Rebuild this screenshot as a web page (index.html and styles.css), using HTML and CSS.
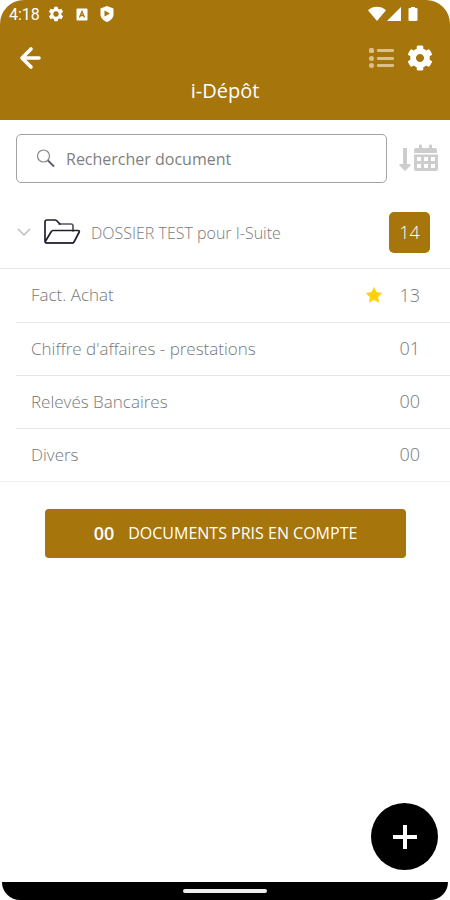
FILE: index.html
```html
<!DOCTYPE html>
<html lang="fr">
<head>
<meta charset="utf-8">
<meta name="viewport" content="width=device-width, initial-scale=1">
<title>i-Dépôt</title>
<link rel="stylesheet" href="styles.css">
</head>
<body>
<div class="screen">
  <header class="header">
    <div class="status">
      <div class="status-group">
        <span class="clock">4:18</span>
        <svg class="status-gear" width="16" height="16" viewBox="0 0 24 24" fill="#fff" aria-hidden="true"><path fill-rule="evenodd" d="M9.500 1h5l.6 3.300 1.900 1.100 3.100-1.200 2.500 4.400-2.500 2.100v2.600l2.500 2.100-2.500 4.400-3.100-1.200-1.900 1.100-.6 3.300h-5l-.6-3.300L7 18.600l-3.100 1.200-2.500-4.400 2.500-2.100v-2.600L1.400 8.600l2.500-4.400L7 5.400l1.900-1.100zM12 8a4 4 0 1 0 0 8 4 4 0 0 0 0-8z"/></svg>
        <svg class="status-app" width="12" height="13" viewBox="0 0 12 13" aria-hidden="true"><rect x="0.500" y="0.500" width="11" height="12" rx="1" fill="#fff"/><path d="M3.500 9.500 6 3.500l2.500 6M4.500 7.500h3" fill="none" stroke="#a6750b" stroke-width="1.300"/></svg>
        <svg width="14" height="16" viewBox="0 0 14 16" aria-hidden="true"><path d="M7 0l6.500 2.500v6c0 3.500-3 6-6.500 7.500C3.500 14.500.5 12 .5 8.500v-6z" fill="#fff"/><path d="M4.500 4.500v6L10 7.500z" fill="#a6750b"/></svg>
      </div>
      <svg width="52" height="16" viewBox="0 0 52 16" fill="#fff" aria-hidden="true"><path d="M-1 4.200C4-.4 12-.4 17 4.200L8 15z"/><path d="M32 1v14H18z"/><path d="M42 1h4v1h1.500q1 0 1 1v11q0 1-1 1h-7q-1 0-1-1V3q0-1 1-1H42z"/></svg>
    </div>
    <div class="toolbar">
      <button class="icon-button" type="button" aria-label="Retour">
        <svg width="22" height="22" viewBox="0 0 22 22" fill="none" stroke="#fff" stroke-width="3.600" stroke-linecap="round" stroke-linejoin="round"><path d="M11 2 2 11l9 9M3 11h16"/></svg>
      </button>
      <div class="toolbar-actions">
        <button class="icon-button" type="button" aria-label="Liste">
          <svg width="26" height="22" viewBox="0 0 26 22" fill="#dbc08c"><rect x="0" y="1" width="5" height="5" rx="1.500"/><rect x="0" y="9" width="5" height="5" rx="2.500"/><rect x="0" y="16" width="5" height="5" rx="2.500"/><rect x="8" y="2" width="17" height="3" rx="1"/><rect x="8" y="10" width="17" height="3" rx="1"/><rect x="8" y="17" width="17" height="3" rx="1"/></svg>
        </button>
        <button class="icon-button" type="button" aria-label="Paramètres">
          <svg width="26" height="26" viewBox="0 0 512 512" fill="#fff"><path d="M487.400 315.700l-42.600-24.600c4.300-23.200 4.300-47 0-70.200l42.600-24.600c4.900-2.800 7.100-8.600 5.500-14-11.100-35.600-30-67.800-54.700-94.600-3.800-4.100-10-5.100-14.800-2.300L380.800 110c-17.900-15.400-38.500-27.300-60.800-35.100V25.800c0-5.600-3.900-10.500-9.400-11.700-36.700-8.200-74.300-7.800-109.200 0-5.500 1.200-9.400 6.100-9.400 11.700V75c-22.200 7.900-42.800 19.800-60.800 35.100L88.700 85.500c-4.900-2.800-11-1.900-14.800 2.300-24.700 26.700-43.600 58.900-54.700 94.600-1.700 5.400.6 11.200 5.500 14L67.300 221c-4.300 23.200-4.300 47 0 70.200l-42.600 24.600c-4.900 2.800-7.100 8.600-5.500 14 11.100 35.600 30 67.800 54.700 94.600 3.800 4.100 10 5.100 14.800 2.300l42.600-24.600c17.900 15.400 38.500 27.300 60.800 35.100v49.200c0 5.600 3.900 10.500 9.400 11.700 36.700 8.200 74.300 7.800 109.200 0 5.500-1.200 9.400-6.100 9.400-11.700v-49.200c22.200-7.900 42.800-19.800 60.800-35.100l42.600 24.600c4.900 2.800 11 1.900 14.800-2.300 24.700-26.700 43.600-58.900 54.700-94.600 1.500-5.500-.7-11.300-5.600-14.100zM256 336c-44.100 0-80-35.900-80-80s35.900-80 80-80 80 35.900 80 80-35.900 80-80 80z"/></svg>
        </button>
      </div>
    </div>
    <h1 class="title">i-Dépôt</h1>
  </header>

  <main class="content">
    <form class="search">
      <label class="search-box">
        <svg width="20" height="20" viewBox="0 0 20 20" fill="none" aria-hidden="true"><circle cx="7.500" cy="7" r="6" stroke="#85878b" stroke-width="1.200"/><path d="M12 11.500 18 17.500" stroke="#5a5c64" stroke-width="1.800"/></svg>
        <input class="search-input" type="search" placeholder="Rechercher document" aria-label="Rechercher document">
      </label>
      <button class="icon-button" type="button" aria-label="Trier par date">
        <svg width="40" height="30" viewBox="0 0 40 30"><g fill="#cdcdcd"><path d="M4 4h4v16h3.500v1.500L6 27 .5 21.500V20H4z"/><path d="M15 9V6q0-2 2-2h3V1.500q0-1 1-1h1q1 0 1 1V4h7V1.500q0-1 1-1h1q1 0 1 1V4h3q2 0 2 2v3z"/><path d="M15 10.500h24V25q0 2-2 2H17q-2 0-2-2z"/></g><path fill="#fff" d="M18 13h4v4h-4zM25 13h4v4h-4zM32 13h4v4h-4zM18 20h4v4h-4zM25 20h4v4h-4zM32 20h4v4h-4z"/></svg>
      </button>
    </form>

    <section>
      <button class="folder" type="button" aria-expanded="true">
        <svg width="14" height="10" viewBox="0 0 14 10" fill="none" stroke="#b2b2b2" stroke-width="1.200" aria-hidden="true"><path d="M1 1l6 6 6-6"/></svg>
        <svg class="folder-icon" width="38" height="28" viewBox="0 0 38 28" fill="none" stroke-width="1.700" stroke-linejoin="round" stroke-linecap="round" aria-hidden="true"><path d="M16 5h12q2 0 2 2v5M4 24h26" stroke="#55565e"/><path d="M2 22V3q0-2 2-2h8q1 0 2 1l3 3M2 23 8 13q1-1.500 2-1.500h25q2 0 1 2L31 23q-.5 1-2 1H4q-2 0-2-2" stroke="#20212e"/></svg>
        <span class="folder-name">DOSSIER TEST pour I-Suite</span>
        <span class="badge">14</span>
      </button>
      <ul class="list">
        <li class="item"><span class="item-name">Fact. Achat</span>
          <svg width="18" height="18" viewBox="0 0 18 18" aria-label="Favori" role="img"><path d="M9 .8l2.500 5.300 5.800.8-4.200 4 1 5.900L9 14l-5.100 2.800 1-5.900-4.200-4 5.800-.8z" fill="#fdd20c"/></svg>
          <span class="count">13</span></li>
        <li class="item"><span class="item-name">Chiffre d'affaires - prestations</span><span class="count">01</span></li>
        <li class="item"><span class="item-name">Relevés Bancaires</span><span class="count">00</span></li>
        <li class="item"><span class="item-name">Divers</span><span class="count">00</span></li>
      </ul>
    </section>

    <button class="submit" type="button"><span class="submit-count">00</span><span>DOCUMENTS PRIS EN COMPTE</span></button>

    <button class="fab" type="button" aria-label="Ajouter">
      <svg width="26" height="26" viewBox="0 0 26 26" stroke="#fff" stroke-width="4"><path d="M13 1v24M1 13h24"/></svg>
    </button>
  </main>

  <footer class="navbar"><span class="handle"></span></footer>
</div>
</body>
</html>
```
FILE: styles.css
```css
* {
  box-sizing: border-box;
}

body {
  margin: 0;
  background: #fff;
  color: #77787a;
  font-family: "Open Sans", "Noto Sans", sans-serif;
  font-size: 17px;
  font-weight: 300;
}

button,
input {
  font: inherit;
  color: inherit;
}

button {
  padding: 0;
  border: 0;
  background: none;
  cursor: pointer;
}

svg {
  display: block;
  flex-shrink: 0;
  overflow: visible;
}

.screen {
  display: flex;
  flex-direction: column;
  min-height: 100vh;
}

.header {
  display: flex;
  flex-direction: column;
  padding-bottom: 14px;
  border-radius: 24px 24px 0 0;
  background: #a6750b;
  color: #fff;
}

.status {
  display: flex;
  align-items: center;
  justify-content: space-between;
  height: 28px;
  padding: 0 29px 0 9px;
}

.status-group {
  display: flex;
  align-items: center;
}

.clock {
  font-family: Roboto, sans-serif;
  font-size: 16px;
  font-weight: 400;
}

.status-gear {
  margin: 0 12px 0 8px;
}

.status-app {
  margin-right: 12px;
}

.toolbar {
  display: flex;
  align-items: center;
  justify-content: space-between;
  height: 48px;
  padding: 12px 17px 0 20px;
}

.toolbar-actions {
  display: flex;
  align-items: center;
  gap: 12px;
}

.icon-button {
  flex-shrink: 0;
}

.title {
  margin: 0;
  font-size: 20px;
  font-weight: 400;
  line-height: 30px;
  text-align: center;
}

.content {
  display: flex;
  flex: 1;
  flex-direction: column;
  padding: 14px 0 12px;
}

.search {
  display: flex;
  align-items: center;
  gap: 12px;
  padding: 0 11px 0 16px;
}

.search-box {
  display: flex;
  flex: 1;
  align-items: center;
  gap: 10px;
  min-width: 0;
  height: 49px;
  padding: 0 19px;
  border: 1px solid #a3a3a3;
  border-radius: 5px;
}

.search-input {
  flex: 1;
  min-width: 0;
  padding: 0;
  border: 0;
  outline: 0;
  background: none;
  font-size: 16px;
  font-weight: 400;
}

.search-input::placeholder {
  color: #808080;
  opacity: 1;
}

.folder {
  display: flex;
  align-items: center;
  width: 100%;
  height: 86px;
  padding: 14px 20px 0 17px;
  border-bottom: 1px solid #e6e6e6;
  text-align: left;
}

.folder-icon {
  margin: 0 10px 0 12px;
}

.folder-name {
  flex: 1;
  font-size: 16px;
}

.badge {
  width: 41px;
  border-radius: 5px;
  background: #a6750b;
  color: #fff;
  font-size: 18px;
  line-height: 41px;
  text-align: center;
}

.list {
  margin: 0;
  padding: 0 0 0 16px;
  border-bottom: 1px solid #f0f0f0;
  list-style: none;
}

.item {
  display: flex;
  align-items: center;
  height: 53px;
  padding: 0 30px 2px 15px;
}

.item + .item {
  border-top: 1px solid #e6e6e6;
}

.item-name {
  flex: 1;
}

.count {
  width: 37px;
  font-size: 18px;
  text-align: right;
}

.submit {
  display: flex;
  align-items: center;
  justify-content: center;
  gap: 14px;
  height: 49px;
  margin: 27px 44px 24px 45px;
  padding-bottom: 2px;
  border-radius: 4px;
  background: #a6750b;
  color: #fff;
  font-size: 16px;
  font-weight: 400;
}

.submit-count {
  font-size: 18px;
  font-weight: 600;
}

.fab {
  display: flex;
  align-items: center;
  justify-content: center;
  align-self: flex-end;
  width: 67px;
  height: 67px;
  margin: auto 12px 0 0;
  border-radius: 50%;
  background: #000;
}

.navbar {
  display: flex;
  align-items: center;
  justify-content: center;
  height: 18px;
  margin: 0 2px;
  border-radius: 0 0 24px 24px;
  background: #000;
}

.handle {
  width: 84px;
  height: 4px;
  border-radius: 2px;
  background: #eee;
}
```
